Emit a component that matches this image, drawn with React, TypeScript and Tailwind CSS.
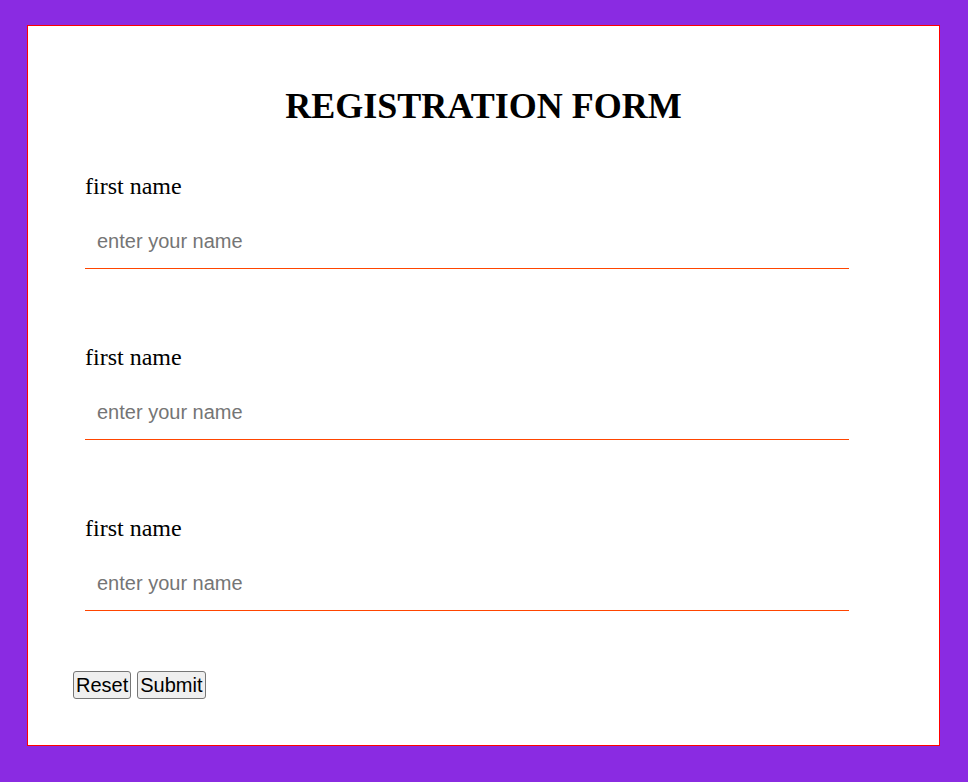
export default function App() {
  const fields = [1, 2, 3];

  return (
    <div className="min-h-screen w-full bg-[#8a2be2] pt-[25px] pl-[27px] font-['Liberation_Serif',serif] text-black">
      <div className="w-[913px] h-[721px] border border-[#ff0000] bg-white px-[45px]">
        <h1 className="mt-[60px] text-center text-[36px] leading-[41px] font-bold">
          REGISTRATION FORM
        </h1>

        <form className="mt-[45px]" onSubmit={(e) => e.preventDefault()}>
          <div className="pl-[12px] flex flex-col gap-[74px]">
            {fields.map((n) => (
              <div key={n} className="flex flex-col">
                <label className="text-[24px] leading-[28px]">first name</label>
                <input
                  type="text"
                  placeholder="enter your name"
                  className="mt-[12px] w-[764px] h-[57px] pl-[12px] pr-[11px] pt-[2px] border-b border-[#ff4500] outline-none font-['Liberation_Sans',Arial,sans-serif] text-[20px] placeholder:text-[#757575]"
                />
              </div>
            ))}
          </div>

          {/* buttons */}
          <div className="mt-[60px] flex gap-[6px] font-['Liberation_Sans',Arial,sans-serif] text-[20px]">
            <button
              type="reset"
              className="h-[28px] px-[2px] leading-[23px] bg-[#efefef] border border-[#767676] rounded-[3px]"
            >
              Reset
            </button>
            <button
              type="submit"
              className="h-[28px] px-[2px] leading-[23px] bg-[#efefef] border border-[#767676] rounded-[3px]"
            >
              Submit
            </button>
          </div>
        </form>
      </div>
    </div>
  );
}
